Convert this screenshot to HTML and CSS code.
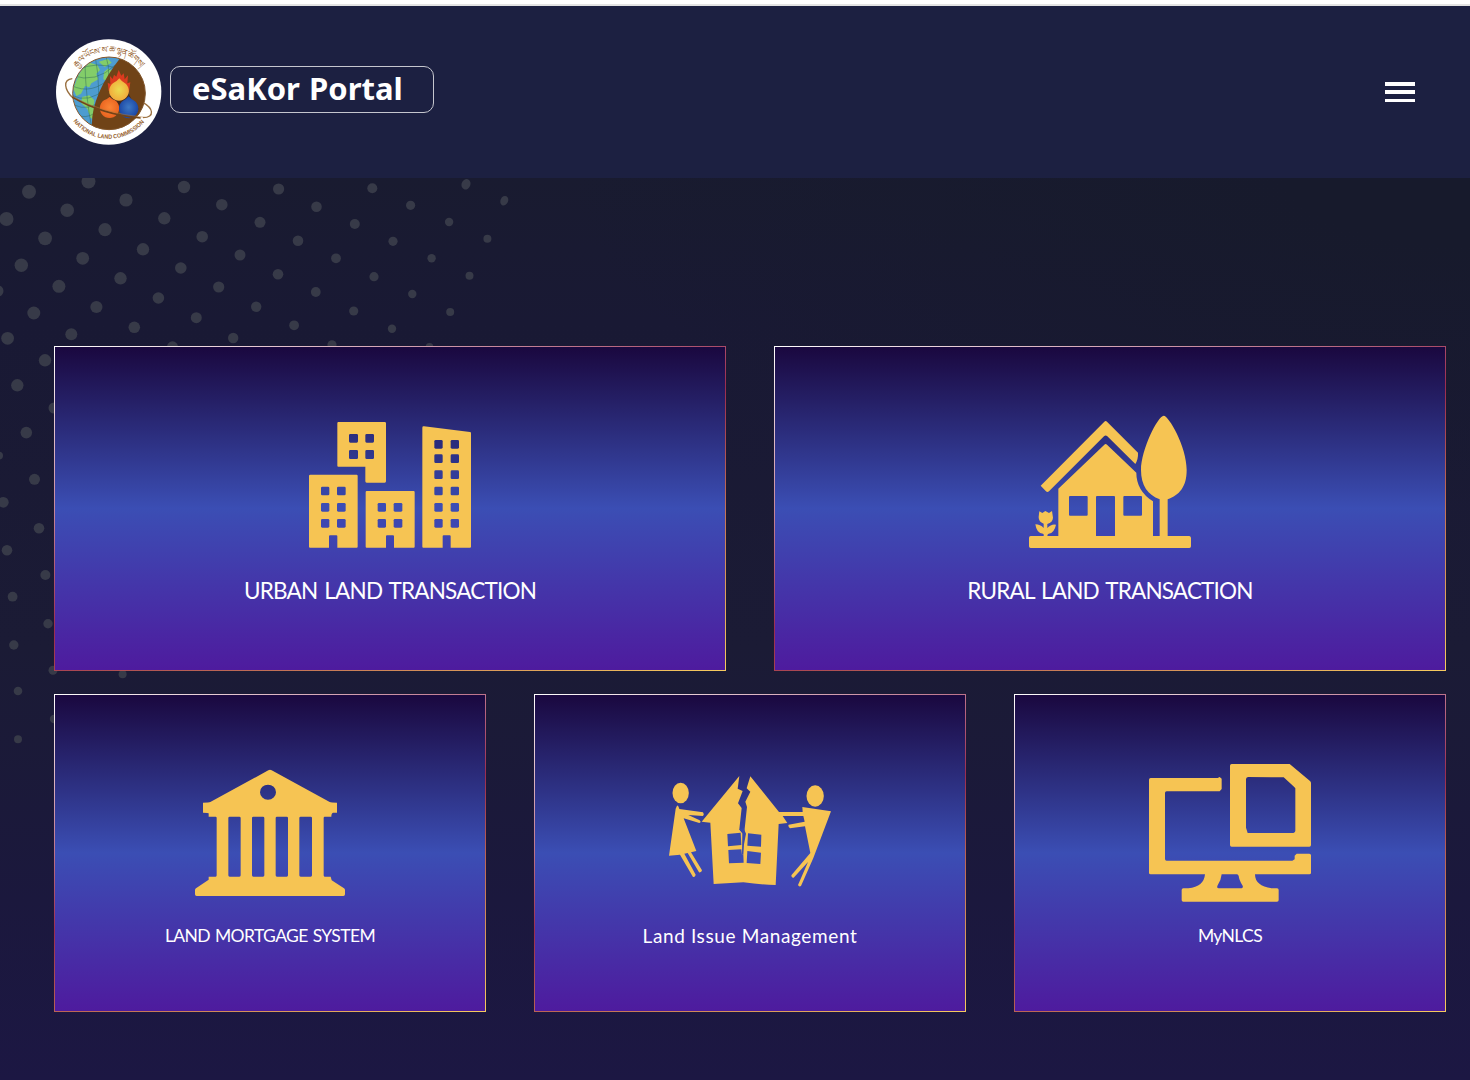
FILE: index.html
```html
<!DOCTYPE html>
<html lang="en">
<head>
<meta charset="utf-8">
<title>eSaKor Portal</title>
<link rel="stylesheet" href="styles.css">
</head>
<body>
<header class="header">
  <div class="brand">
    <svg class="logo" viewBox="0 0 348 345" role="img" aria-label="National Land Commission">
      <defs>
        <clipPath id="globe"><circle cx="177" cy="175" r="109"/></clipPath>
        <path id="arc-top" d="M80 99 A124 124 0 0 1 279 105"/>
        <path id="arc-bottom" d="M70 259 A136 136 0 0 0 286 257"/>
        <radialGradient id="yellow"><stop offset="0" stop-color="#ebdc50"/><stop offset="1" stop-color="#f2ac3c"/></radialGradient>
        <radialGradient id="orange"><stop offset="0" stop-color="#fb8535"/><stop offset="1" stop-color="#ea6420"/></radialGradient>
        <radialGradient id="blue"><stop offset="0" stop-color="#3d78c4"/><stop offset="1" stop-color="#1c47a5"/></radialGradient>
      </defs>
      <circle cx="176" cy="171" r="158" fill="#fff"/>
      <path d="M70 190C42 164 38 134 67 131M278 202C310 219 316 247 279 248" fill="none" stroke="#9a7040" stroke-width="4"/>
      <g clip-path="url(#globe)">
        <rect x="60" y="60" width="240" height="240" fill="#4d9cd0"/>
        <path d="M96 104L120 83L142 90L150 105L139 116L145 133L124 145L118 157L105 153L93 176L79 183L70 161L84 124ZM146 80L174 72L185 83L164 96ZM162 111L175 100L192 111L196 128L179 142L160 133ZM96 186L118 181L133 196L131 213L148 224L136 252L122 250L112 222L94 205ZM151 168L164 165L159 201L143 208Z" fill="#83cd69"/>
        <path d="M67 122Q138 146 196 90M63 151Q127 183 185 124M65 181Q117 207 167 160M72 210Q117 231 155 194M92 244Q123 249 145 224M105 91Q108 192 124 272M137 74Q154 153 138 285M168 64Q188 122 160 188M83 105Q138 77 205 101" fill="none" stroke="#285f55" stroke-width="1.3"/>
        <path d="M213 66Q111 195 128 300H300V66Z" fill="#704317"/>
      </g>
      <circle cx="177" cy="175" r="109" fill="none" stroke="#855629" stroke-width="3"/>
      <path d="M176 168L173 143L181 147L180 123L188 132L192 119L199 125L206 105L214 122L221 115L224 133L234 121L232 145L241 142L237 171Z" fill="#dc3b1f"/>
      <path d="M208 138L229 156L237 178L244 192L266 222L250 246L220 234L198 220L157 210L173 193Z" fill="#452a1c"/>
      <path d="M208 130Q214 138 223 143A29.500 29.500 0 1 1 191 143Q202 138 208 130" fill="url(#yellow)"/>
      <path d="M179 185Q186 193 195 196A29 29 0 1 1 162 196Q171 193 179 185" fill="url(#orange)"/>
      <path d="M236 184Q243 193 253 197A29 29 0 1 1 219 197Q229 193 236 184" fill="url(#blue)"/>
      <path d="M67 186Q157 239 272 249" fill="none" stroke="#704319" stroke-width="5"/>
      <path d="M66 184Q157 235 284 247" fill="none" stroke="#b07a3d" stroke-width="1.5"/>
      <text class="seal-top"><textPath href="#arc-top" textLength="222">རྒྱལ་ཡོངས་ས་ཆ་ལྷན་ཚོགས།</textPath></text>
      <text class="seal-bottom"><textPath href="#arc-bottom" textLength="244" lengthAdjust="spacingAndGlyphs">NATIONAL LAND COMMISSION</textPath></text>
    </svg>
    <h1 class="title">eSaKor Portal</h1>
  </div>
  <button class="menu" aria-label="Menu"><span></span><span></span><span></span></button>
</header>

<main class="main">
  <svg class="dots" viewBox="0 178 540 590" aria-hidden="true">
    <circle cx="29" cy="191.7" r="7"/><circle cx="88.5" cy="181.5" r="7"/><circle cx="184" cy="187" r="6.2"/><circle cx="278.6" cy="189" r="5.6"/><circle cx="372.3" cy="188.3" r="5"/><ellipse cx="466" cy="184.3" rx="4.4" ry="5.4" transform="rotate(20 466 184.3)"/><ellipse cx="504.3" cy="200.7" rx="3.8" ry="5" transform="rotate(25 504.3 200.7)"/>
    <circle cx="6.5" cy="219" r="7"/><circle cx="67.2" cy="210.3" r="6.8"/><circle cx="126" cy="200" r="6.6"/><circle cx="221.8" cy="204.7" r="5.8"/><circle cx="316.5" cy="206.7" r="5.3"/><circle cx="410.6" cy="205.3" r="4.6"/><circle cx="449.1" cy="222" r="4.2"/><circle cx="487.4" cy="238.7" r="4"/>
    <circle cx="164.3" cy="218.3" r="6.2"/><circle cx="260" cy="222.3" r="5.5"/><circle cx="354.8" cy="224" r="5"/><circle cx="393" cy="241.3" r="4.6"/><circle cx="431.6" cy="258.3" r="4.2"/><circle cx="469.5" cy="275.7" r="4"/>
    <circle cx="45.1" cy="238.3" r="6.9"/><circle cx="105" cy="229.7" r="6.6"/><circle cx="202.2" cy="236.7" r="5.8"/><circle cx="298" cy="240.7" r="5.3"/><circle cx="143" cy="249.3" r="6.2"/><circle cx="240" cy="255" r="5.5"/><circle cx="336" cy="258.3" r="4.9"/><circle cx="374" cy="276.7" r="4.6"/><circle cx="412.3" cy="294" r="4.2"/><circle cx="450.2" cy="312" r="4"/>
    <circle cx="21.3" cy="265.3" r="6.7"/><circle cx="82.7" cy="258.3" r="6.4"/><circle cx="180.8" cy="268" r="5.8"/><circle cx="278" cy="274.3" r="5.3"/><circle cx="120.5" cy="278.3" r="6.2"/><circle cx="218.7" cy="287" r="5.6"/><circle cx="315.8" cy="292" r="4.9"/><circle cx="353.7" cy="311" r="4.6"/><circle cx="392" cy="328.7" r="4.2"/><circle cx="429.5" cy="346.8" r="3.8"/>
    <circle cx="-2" cy="291" r="5.5"/><circle cx="58.9" cy="286.3" r="6.5"/><circle cx="158.4" cy="298" r="5.8"/><circle cx="256.2" cy="306.7" r="5.2"/><circle cx="96.4" cy="307" r="6.1"/><circle cx="196.3" cy="317.7" r="5.5"/><circle cx="294.1" cy="325.3" r="4.9"/><circle cx="332" cy="344.8" r="4.6"/>
    <circle cx="33.8" cy="313" r="6.5"/><circle cx="134.3" cy="327.3" r="5.8"/><circle cx="233.2" cy="338" r="5.2"/><circle cx="71.3" cy="334.3" r="6"/><circle cx="172.5" cy="346.8" r="5.5"/><circle cx="7.6" cy="338.3" r="6.4"/><circle cx="45" cy="360.3" r="6.2"/>
    <circle cx="17.3" cy="385.3" r="6.2"/><circle cx="54" cy="408" r="5.5"/><circle cx="26.3" cy="432.6" r="5.8"/><circle cx="-1" cy="455.6" r="4"/><circle cx="34.5" cy="479.3" r="5.5"/><circle cx="3.3" cy="502.3" r="5.4"/><circle cx="39" cy="528.3" r="5.3"/><circle cx="7" cy="550.3" r="5.3"/><circle cx="45.4" cy="575" r="5"/><circle cx="12.6" cy="596.7" r="4.9"/><circle cx="48" cy="623.7" r="4.7"/><circle cx="13.8" cy="645" r="4.7"/><circle cx="53" cy="670.3" r="4.5"/><circle cx="122.6" cy="674.3" r="4"/><circle cx="18" cy="691" r="4.3"/><circle cx="54" cy="719" r="4.2"/><circle cx="18" cy="739.3" r="4"/>
  </svg>

  <div class="row row-large">
    <a class="card">
      <svg class="icon" viewBox="0 0 600 450" aria-hidden="true">
        <path fill-rule="evenodd" d="M145 36H284Q288 36 288 40V214Q288 218 284 218H230Q226 218 226 214V170H145Q142 170 142 167V40Q142 36 145 36ZM181 72h19q4 0 4 4v18q0 4-4 4h-19q-4 0-4-4V76q0-4 4-4ZM230 72h18q4 0 4 4v18q0 4-4 4h-18q-4 0-4-4V76q0-4 4-4ZM181 120h19q4 0 4 4v19q0 4-4 4h-19q-4 0-4-4v-19q0-4 4-4ZM230 120h18q4 0 4 4v19q0 4-4 4h-18q-4 0-4-4v-19q0-4 4-4Z"/>
        <path d="M61 194H200Q203 194 203 198V410Q203 413 200 413H142V379Q142 376 139 376H120Q117 376 117 379V413H60Q57 413 57 410V198Q57 194 61 194ZM230 243H371Q374 243 374 247V410Q374 413 371 413H312V379Q312 376 309 376H291Q288 376 288 379V413H230Q227 413 227 410V247Q227 243 230 243ZM402 49L540 66Q543 66 543 70V410Q543 413 540 413H482V379Q482 376 479 376H461Q458 376 458 379V413H400Q397 413 397 410V53Q397 48 402 49Z"/>
        <g class="panes panes-upper">
          <rect x="433" y="90" width="25" height="26" rx="4" fill="#292c7d"/><rect x="482" y="90" width="25" height="26" rx="4" fill="#292c7d"/>
          <rect x="433" y="133" width="25" height="26" rx="4" fill="#2d3389"/><rect x="482" y="133" width="25" height="26" rx="4" fill="#2d3389"/>
          <rect x="433" y="181" width="25" height="26" rx="4" fill="#333d99"/><rect x="482" y="181" width="25" height="26" rx="4" fill="#333d99"/>
          <rect x="93" y="230" width="25" height="26" rx="4" fill="#3745a6"/><rect x="141" y="230" width="26" height="26" rx="4" fill="#3745a6"/><rect x="433" y="230" width="25" height="26" rx="4" fill="#3745a6"/><rect x="482" y="230" width="25" height="26" rx="4" fill="#3745a6"/>
        </g>
        <g class="panes panes-lower" fill="#3c4db4">
          <rect x="93" y="279" width="25" height="26" rx="4"/><rect x="141" y="279" width="26" height="26" rx="4"/><rect x="263" y="279" width="25" height="26" rx="4"/><rect x="311" y="279" width="26" height="26" rx="4"/><rect x="433" y="279" width="25" height="26" rx="4"/><rect x="482" y="279" width="25" height="26" rx="4"/>
          <g fill="#3e47b1"><rect x="93" y="327" width="25" height="26" rx="4"/><rect x="141" y="327" width="26" height="26" rx="4"/><rect x="263" y="327" width="25" height="26" rx="4"/><rect x="311" y="327" width="26" height="26" rx="4"/><rect x="433" y="327" width="25" height="26" rx="4"/><rect x="482" y="327" width="25" height="26" rx="4"/></g>
        </g>
      </svg>
      <span class="label">URBAN LAND TRANSACTION</span>
    </a>
    <a class="card">
      <svg class="icon" viewBox="0 15 600 450" aria-hidden="true">
        <path d="M92 242L283 50Q287 46 291 50L384 143Q385 162 376 177L292 94Q287 89 282 94L117 259Q112 263 108 259Z"/>
        <path fill-rule="evenodd" d="M461 32C476 32 530 124 530 195C530 246 508 270 473 283V393H538Q543 394 543 399V424Q543 429 538 429H62Q57 429 57 424V399Q57 393 62 393H101Q102 387 99 386Q80 386 76 358Q91 358 101 369V356Q85 350 86 335L88 319L97 324L106 318L117 324L126 318L129 338Q128 352 112 357V369Q124 356 138 359Q133 384 116 386Q112 387 112 393H145V251L283 119Q287 115 291 119L379 203Q379 257 429 289V393H449V283C414 270 393 242 393 195C393 134 444 32 461 32ZM180 273H230Q233 273 233 276V329Q233 332 230 332H180Q177 332 177 329V276Q177 273 180 273ZM261 273H312Q315 273 315 276V393H258V276Q258 273 261 273ZM343 273H393Q396 273 396 276V329Q396 332 393 332H343Q340 332 340 329V276Q340 273 343 273Z"/>
      </svg>
      <span class="label">RURAL LAND TRANSACTION</span>
    </a>
  </div>

  <div class="row row-small">
    <a class="card">
      <svg class="icon" viewBox="-30 -15 600 450" aria-hidden="true">
        <path fill-rule="evenodd" d="M265 31Q270 28 275 31L449 126Q453 128 471 128V158H459Q454 159 454 170H434Q431 170 431 174V346Q431 350 434 350H452L455 361L492 385Q495 387 495 391V403Q495 408 490 408H50Q45 408 45 403V391Q45 387 48 385L86 359V350H107Q110 350 110 346V174Q110 170 107 170H86V160Q86 158 69 158V128Q87 128 91 126ZM264 74A24 22.5 0 1 0 264 119A24 22.5 0 1 0 264 74ZM149 170H178Q182 170 182 174V346Q182 350 178 350H149Q145 350 145 346V174Q145 170 149 170ZM220 170H249Q253 170 253 174V346Q253 350 249 350H220Q216 350 216 346V174Q216 170 220 170ZM291 170H320Q324 170 324 174V346Q324 350 320 350H291Q287 350 287 346V174Q287 170 291 170ZM362 170H392Q396 170 396 174V346Q396 350 392 350H362Q358 350 358 346V174Q358 170 362 170Z"/>
      </svg>
      <span class="label">LAND MORTGAGE SYSTEM</span>
    </a>
    <a class="card">
      <svg class="icon" viewBox="-15 -30 600 450" aria-hidden="true">
        <ellipse cx="77" cy="84" rx="24.5" ry="31"/>
        <ellipse cx="480.5" cy="93" rx="26" ry="32"/>
        <path d="M66 122Q70 119 73 132L144 142Q149 148 144 153L100 150L134 166Q140 172 133 174L86 160L124 258L108 262L141 316Q140 323 132 322L98 264L88 266L122 329Q121 337 114 336L75 269L42 272L62 131Z"/>
        <path d="M253 33L248 71L263 78L249 115L260 129L253 193L267 210L276 126L271 110L286 80L275 70L286 34L372 141H443L442 126L528 139L475 279L438 363Q432 367 429 360L459 291L416 338Q409 340 409 331L466 264L450 184L405 190Q398 185 401 179L449 170L445 153H383L397 174L371 177L362 360Q316 359 265 352L176 357L166 173L140 170Z"/>
        <g fill="#384aab">
          <path d="M217 207L257 203L259 240L219 244ZM279 205L319 209L318 245L277 242Z"/>
          <path d="M252 193L262 205L261 269H265L267 238L273 206L266 190Z"/>
        </g>
        <path d="M220 255L259 253L261 269H265L266 293L222 295ZM277 258L318 263L316 297L275 294Z" fill="#3c4cb3"/>
      </svg>
      <span class="label label-mixed">Land Issue Management</span>
    </a>
    <a class="card">
      <svg class="icon" viewBox="-30 0 600 450" aria-hidden="true">
        <path fill-rule="evenodd" d="M275 27H449L510 78Q513 81 513 84V270Q513 275 508 275H275Q270 275 270 270V32Q270 27 275 27ZM324 66Q318 67 318 73V218L323 234H456Q465 234 466 227V100L462 95L431 67Z"/>
        <path d="M32 69H233L239 66L245 71V102L239 109H80Q75 109 75 114V312Q75 317 80 317H457L464 313V302L470 296H508Q513 296 513 301V353Q513 358 508 358H345Q345 393 395 400H411Q416 401 416 405V435Q416 440 411 440H130Q125 440 125 435V405Q125 400 130 400H145Q192 395 195 358H32Q27 358 27 353V74Q27 69 32 69ZM245 358Q243 377 233 391Q229 400 236 400H305Q310 398 308 392Q297 375 296 362L292 358Z"/>
      </svg>
      <span class="label">MyNLCS</span>
    </a>
  </div>
</main>
</body>
</html>
```
FILE: styles.css
```css
* { box-sizing: border-box; }

body {
  margin: 0;
  height: 1080px;
  display: flex;
  flex-direction: column;
  overflow: hidden;
  background: #1b1840;
  font-family: Lato, "Open Sans", sans-serif;
  color: #fff;
}

.header {
  flex: none;
  height: 178px;
  display: flex;
  justify-content: space-between;
  align-items: center;
  padding: 2px 55px 0 50px;
  background: #1c2041;
  border-top: 4px solid #fff;
  box-shadow: inset 0 2px #e3e3e3;
}

.brand { display: flex; align-items: center; gap: 4px; margin-top: 1px; }
.logo { display: block; width: 116px; height: 115px; }
.seal-top { font: 25px "Noto Sans", sans-serif; fill: #95602c; }
.seal-bottom { font: bold 18px "Liberation Sans", sans-serif; fill: #95602c; }

.title {
  width: 264px;
  height: 47px;
  margin: -6px 0 0;
  padding-left: 21px;
  border: 1px solid #c5c6ce;
  border-radius: 10px;
  font: 700 31px/42px "Noto Sans", sans-serif;
  letter-spacing: 0;
  word-spacing: 1px;
  white-space: nowrap;
}

.menu {
  display: flex;
  flex-direction: column;
  justify-content: space-between;
  width: 30px;
  height: 20px;
  padding: 0;
  border: 0;
  background: none;
}
.menu span { height: 3.5px; background: #fff; }

.main {
  position: relative;
  flex: 1;
  padding: 168px 24px 0 54px;
  background:
    radial-gradient(ellipse 900px 330px at 100% 0, #171a2c 20%, transparent),
    linear-gradient(#191b30 0, #191934 16%, #1b1b35 52%, #1b183d 80%, #1c1743 100%);
}

.dots {
  position: absolute;
  top: 0;
  left: 0;
  width: 540px;
  height: 590px;
  fill: #373a48;
}

.row { position: relative; display: grid; gap: 48px; }
.row-large { grid-template-columns: 1fr 1fr; margin-bottom: 23px; }
.row-small { grid-template-columns: repeat(3, 1fr); }

.card {
  display: flex;
  flex-direction: column;
  align-items: center;
  border: 1px solid;
  border-image: linear-gradient(160deg, #fff, #9b2c50 50%, #f7cb5e) 1;
  background: linear-gradient(#1a083f, #3b4eb4 50%, #4e1b9e);
}
.row-large .card { height: 325px; padding-top: 63px; }
.row-small .card { height: 318px; padding-top: 60px; }

.icon { flex: none; width: 200px; height: 150px; fill: #f6c453; }

.label { white-space: nowrap; }
.row-large .label { margin-top: 15px; font-size: 22.5px; line-height: 32px; letter-spacing: -0.8px; word-spacing: 2px; }
.row-small .label { margin-top: 18px; font-size: 17.5px; line-height: 26px; letter-spacing: -0.6px; word-spacing: 1px; }
.row-small .label-mixed { font-size: 19px; letter-spacing: 0.62px; word-spacing: 0; }
```
